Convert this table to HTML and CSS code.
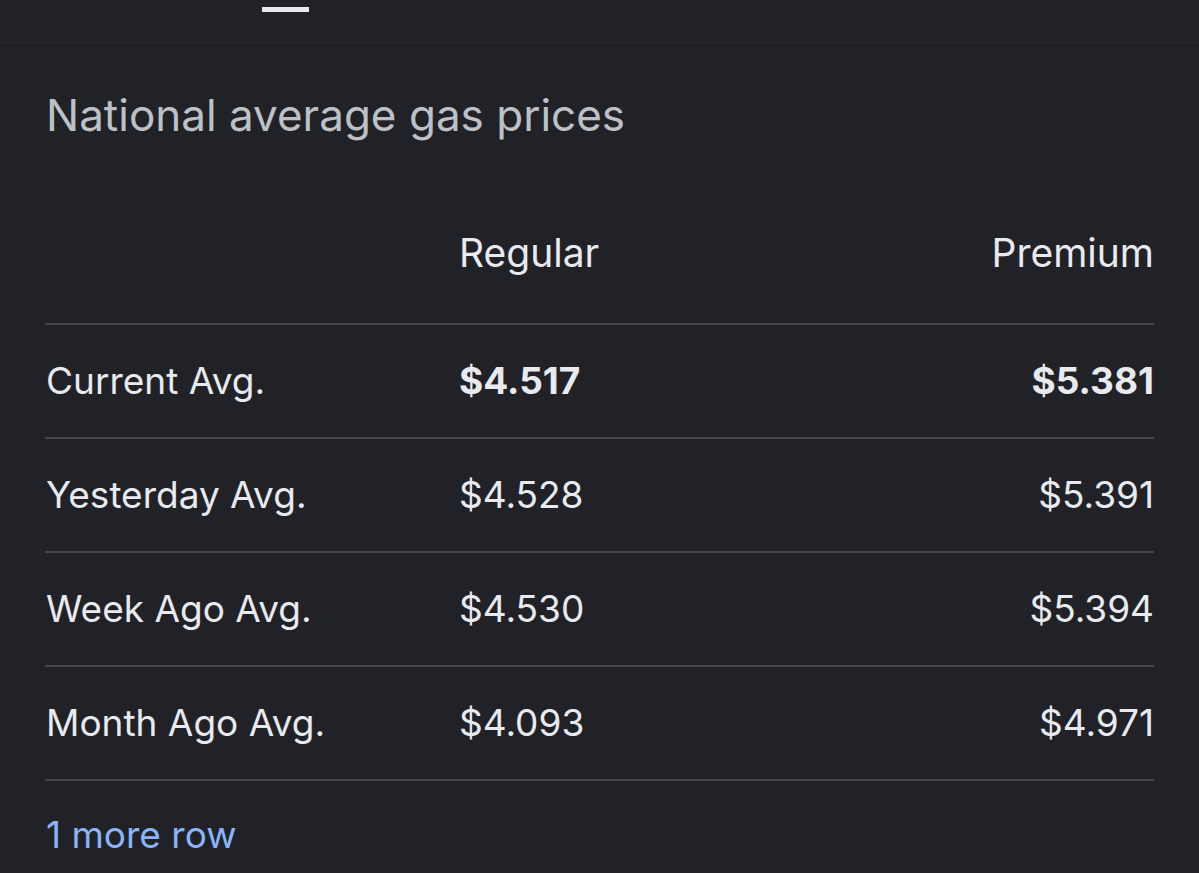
FILE: index.html
```html
<!DOCTYPE html>
<html lang="en">
<head>
<meta charset="utf-8">
<title>National average gas prices</title>
<link rel="stylesheet" href="styles.css">
</head>
<body>
<div class="tabs">
  <div class="tab"><span class="indicator"></span></div>
</div>
<section class="card">
  <h2 class="title">National average gas prices</h2>
  <div class="table">
    <div class="row head">
      <div class="cell label"></div>
      <div class="cell reg">Regular</div>
      <div class="cell prem">Premium</div>
    </div>
    <div class="row">
      <div class="cell label">Current Avg.</div>
      <div class="cell reg strong">$4.517</div>
      <div class="cell prem strong">$5.381</div>
    </div>
    <div class="row">
      <div class="cell label">Yesterday Avg.</div>
      <div class="cell reg">$4.528</div>
      <div class="cell prem">$5.391</div>
    </div>
    <div class="row">
      <div class="cell label">Week Ago Avg.</div>
      <div class="cell reg">$4.530</div>
      <div class="cell prem">$5.394</div>
    </div>
    <div class="row last">
      <div class="cell label">Month Ago Avg.</div>
      <div class="cell reg">$4.093</div>
      <div class="cell prem">$4.971</div>
    </div>
  </div>
  <a class="more" href="#">1 more row</a>
</section>
</body>
</html>
```

FILE: styles.css
```css
html, body {
  margin: 0;
  padding: 0;
  background: #212227;
}
body {
  font-family: Inter, Roboto, "Liberation Sans", sans-serif;
  color: #e8eaed;
  width: 1199px;
  height: 873px;
  overflow: hidden;
}
.tabs {
  height: 42px;
  border-bottom: 1px solid #2b2c31;
  display: flex;
  padding-left: 262px;
}
.tab {
  display: flex;
  align-items: flex-start;
  padding-top: 7px;
}
.indicator {
  display: block;
  width: 47px;
  height: 5px;
  background: #e8eaed;
}
.card {
  padding: 0 45px;
}
.title {
  margin: 47px 0 0 1px;
  font-size: 44px;
  line-height: 50px;
  font-weight: 400;
  color: #bdc1c6;
}
.table {
  display: flex;
  flex-direction: column;
}
.row {
  display: grid;
  grid-template-columns: 414px 1fr auto;
  align-items: center;
  height: 112px;
  border-top: 2px solid #45474c;
  font-size: 37px;
  line-height: 44px;
}
.row.head {
  border-top: none;
  height: 44px;
  margin-top: 91px;
  margin-bottom: 48px;
  font-size: 39px;
}
.row.last {
  border-bottom: 2px solid #45474c;
}
.cell.label {
  padding-left: 1px;
}
.cell.prem {
  text-align: right;
}
.strong {
  font-weight: 700;
}
.more {
  display: block;
  margin-top: 32px;
  font-size: 37px;
  line-height: 44px;
  color: #8ab4f8;
  text-decoration: none;
  padding-left: 1px;
}
```
